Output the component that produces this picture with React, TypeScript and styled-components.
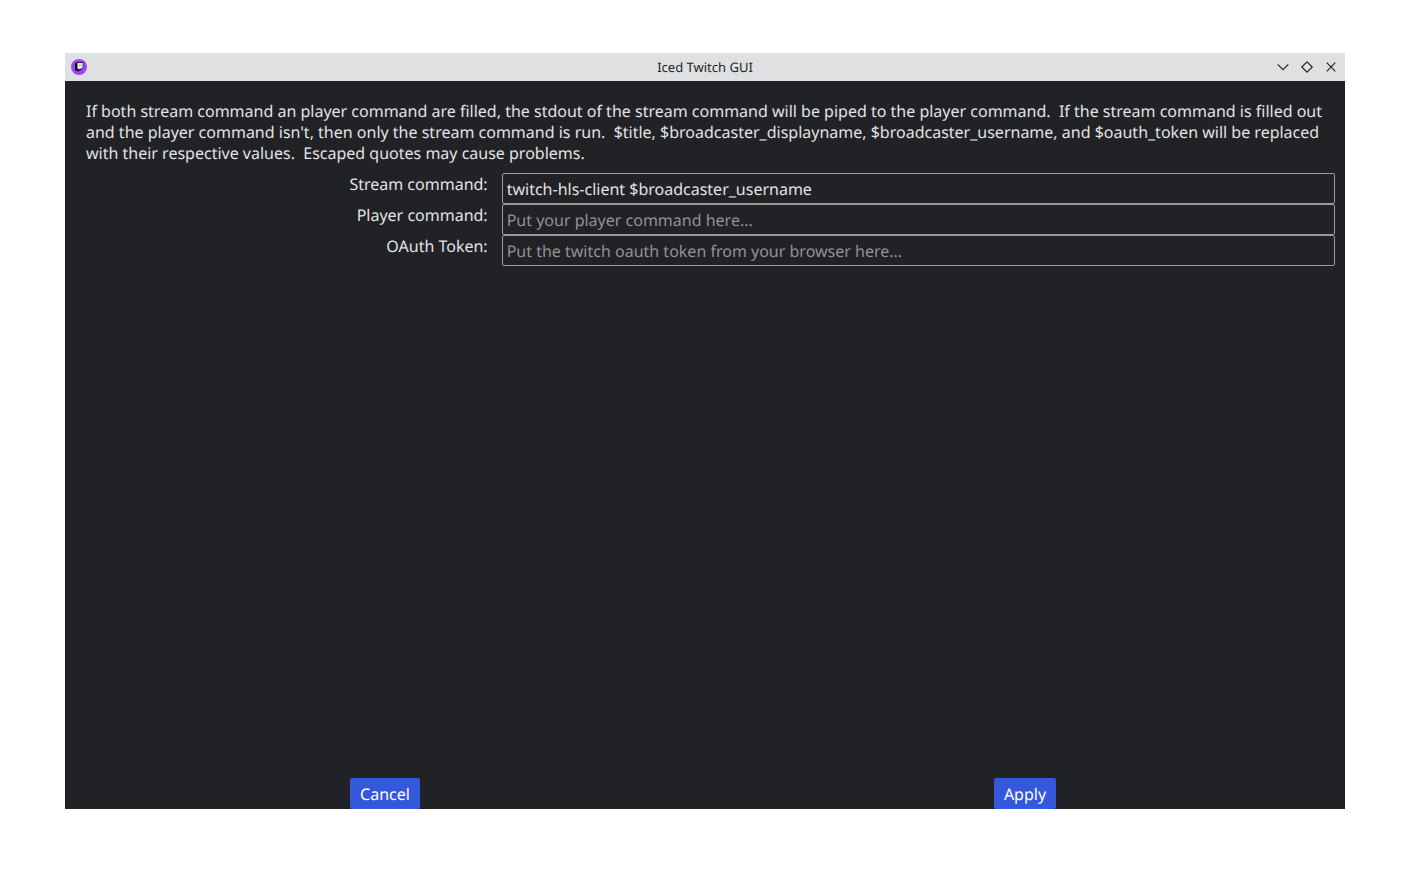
import React from "react";
import styled, { createGlobalStyle } from "styled-components";

const Global = createGlobalStyle`
  * { box-sizing: border-box; }
  body { margin: 0; background: #fff; font-family: "Noto Sans", sans-serif; text-rendering: geometricPrecision; }
`;

const Desktop = styled.div`
  display: flex;
  min-height: 100vh;
  padding: 53px 65px 77px;
`;

const Window = styled.main`
  flex: 1;
  display: flex;
  flex-direction: column;
  background: #212226;
  color: #e3e3e3;
`;

const TitleBar = styled.header`
  display: grid;
  grid-template-columns: 1fr auto 1fr;
  align-items: center;
  height: 28px;
  padding: 0 6px;
  background: #dee0e2;
  color: #232629;
`;

const Title = styled.h1`
  margin: 0;
  font-size: 13px;
  line-height: 18px;
  font-weight: 400;
`;

const Controls = styled.div`
  display: flex;
  justify-content: flex-end;
  gap: 8px;
`;

const ControlButton = styled.button`
  width: 16px;
  height: 16px;
  padding: 0;
  border: 0;
  background: none;
  color: inherit;
  svg { display: block; }
`;

const Content = styled.form`
  flex: 1;
  display: flex;
  flex-direction: column;
  padding-top: 20px;
`;

const Help = styled.p`
  margin: 0;
  padding: 0 20px 0 21px;
  font-size: 16px;
  line-height: 21px;
  white-space: pre-wrap;
`;

const Fields = styled.div`
  padding: 9px 10px;
`;

const Field = styled.div`
  display: grid;
  grid-template-columns: 1fr 2fr;
  column-gap: 10px;
  height: 31px;
`;

const Label = styled.label`
  padding-right: 4px;
  text-align: right;
  font-size: 16px;
  line-height: 23px;
`;

const Input = styled.input`
  width: 100%;
  min-width: 0;
  height: 31px;
  padding: 0 4px;
  border: 1px solid #9a9a9a;
  border-radius: 2px;
  background: #212226;
  color: #e3e3e3;
  font: 16px "Noto Sans", sans-serif;
  text-rendering: inherit;
  outline: none;
  &::placeholder { color: #929292; opacity: 1; }
`;

const Actions = styled.div`
  display: grid;
  grid-template-columns: 1fr 1fr;
  justify-items: center;
  margin-top: auto;
`;

const ActionButton = styled.button`
  height: 31px;
  padding: 0 10px;
  border: 0;
  border-radius: 2px;
  background: #3358db;
  color: #fff;
  font: 16px "Noto Sans", sans-serif;
  text-rendering: inherit;
`;

export default function App() {
  return (
    <Desktop>
      <Global />
      <Window>
        <TitleBar>
          <svg width="16" height="16" viewBox="0 0 16 16" aria-hidden="true">
            <circle cx="8" cy="8" r="8" fill="#9c45fb" />
            <path d="M5.500 3.300h6.800v5.200l-3 3H8.200L6.400 13.200v-1.700H4V5z" fill="#08080a" />
            <path d="M6.400 4h5.400v4.200l-1.500 1.500H8.900L7.700 10.800V9.700H6.400z" fill="#ececec" />
            <path d="M8.800 5.400v2M10.500 5.400v2" stroke="#999" strokeWidth=".7" />
          </svg>
          <Title>Iced Twitch GUI</Title>
          <Controls>
            <ControlButton type="button" aria-label="Minimize">
              <svg width="16" height="16" fill="none" stroke="currentColor" strokeWidth="1.200"><path d="M2.700 5.300 8 10.600l5.300-5.300" /></svg>
            </ControlButton>
            <ControlButton type="button" aria-label="Maximize">
              <svg width="16" height="16" fill="none" stroke="currentColor" strokeWidth="1.200"><path d="M8 2.800 13.200 8 8 13.200 2.800 8z" /></svg>
            </ControlButton>
            <ControlButton type="button" aria-label="Close">
              <svg width="16" height="16" fill="none" stroke="currentColor" strokeWidth="1.200"><path d="m3.700 3.700 8.600 8.600m0-8.600-8.600 8.600" /></svg>
            </ControlButton>
          </Controls>
        </TitleBar>
        <Content onSubmit={(e) => e.preventDefault()}>
          <Help>
            {"If both stream command an player command are filled, the stdout of the stream command will be piped to the player command.  If the stream command is filled out and the player command isn't, then only the stream command is run.  $title, $broadcaster_displayname, $broadcaster_username, and $oauth_token will be replaced with their respective values.  Escaped quotes may cause problems."}
          </Help>
          <Fields>
            <Field>
              <Label htmlFor="stream">Stream command:</Label>
              <Input id="stream" defaultValue="twitch-hls-client $broadcaster_username" spellCheck={false} />
            </Field>
            <Field>
              <Label htmlFor="player">Player command:</Label>
              <Input id="player" placeholder="Put your player command here..." />
            </Field>
            <Field>
              <Label htmlFor="token">OAuth Token:</Label>
              <Input id="token" placeholder="Put the twitch oauth token from your browser here..." />
            </Field>
          </Fields>
          <Actions>
            <ActionButton type="button">Cancel</ActionButton>
            <ActionButton type="submit">Apply</ActionButton>
          </Actions>
        </Content>
      </Window>
    </Desktop>
  );
}
